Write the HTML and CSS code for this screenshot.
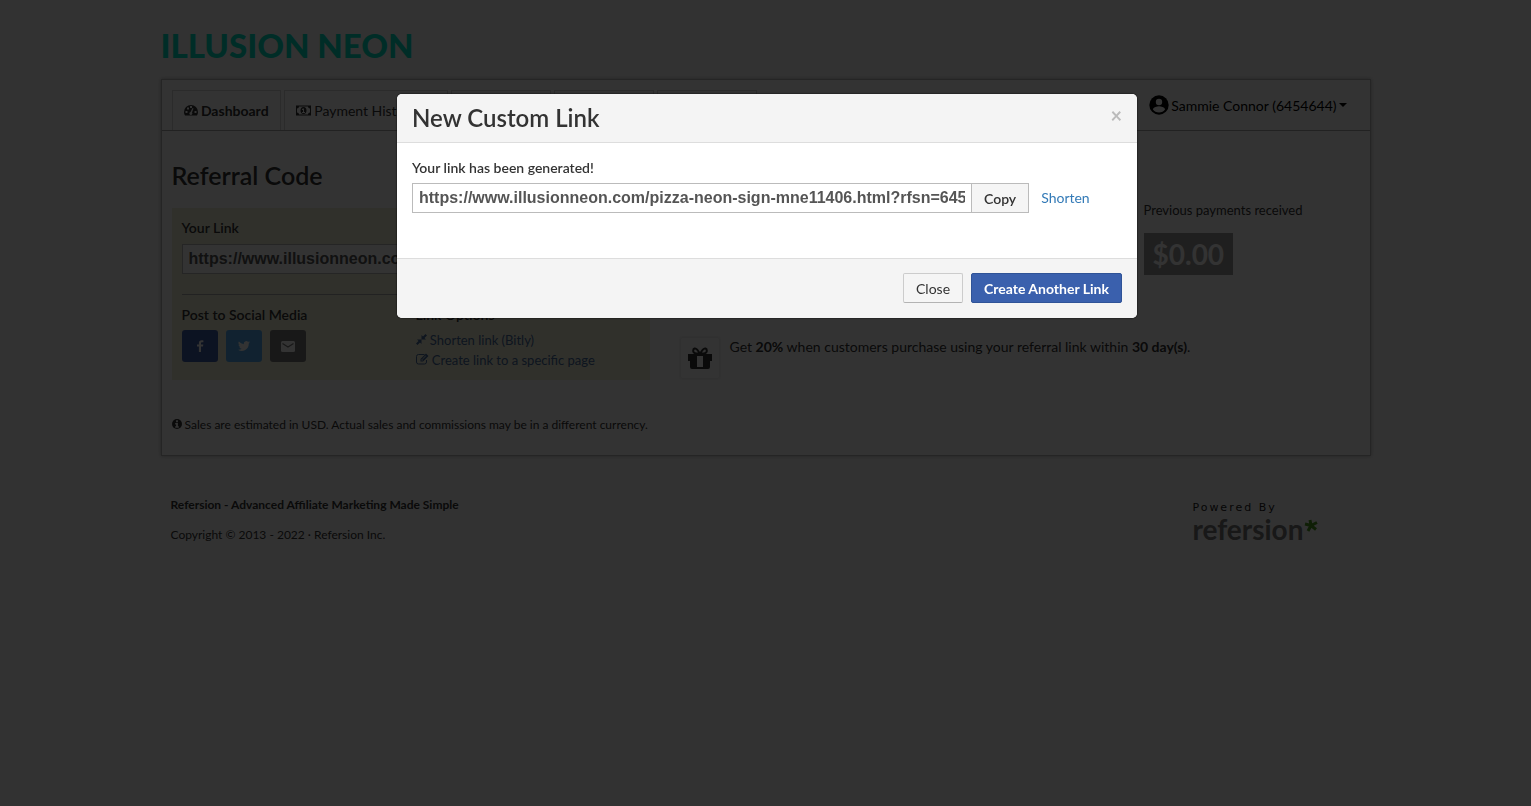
FILE: index.html
```html
<!DOCTYPE html>
<html lang="en">
<head>
    <meta charset="UTF-8">
    <meta name="viewport" content="width=device-width, initial-scale=1.0">
    <title>Referral Code</title>
    <link rel="stylesheet" href="styles.css">
</head>
<body>

<div class="container">
    <header class="brand">ILLUSION NEON</header>

    <main class="panel">
        <nav class="topbar">
            <div class="tabs">
                <a href="#" class="tab active">
                    <svg width="14" height="12" viewBox="0 0 28 24"><path fill="currentColor" fill-rule="evenodd" d="M14 2a14 14 0 0 0-14 14c0 3 1 5 2 7h24c1-2 2-4 2-7A14 14 0 0 0 14 2zM3 14h4v4H3zM6 7h4v4H6zM12 4h4v4h-4zM21 14h4v4h-4zM17 8l2 1-3 8a3 3 0 1 1-3-1z"/></svg>
                    Dashboard
                </a>
                <a href="#" class="tab wide">
                    <svg width="15" height="11" viewBox="0 0 30 22"><path fill="currentColor" fill-rule="evenodd" d="M0 1h30v20H0zM6 3a4 4 0 0 1-4 4v8a4 4 0 0 1 4 4h18a4 4 0 0 1 4-4V7a4 4 0 0 1-4-4zM15 4c4 0 6 3 6 7s-2 7-6 7-6-3-6-7 2-7 6-7zm-3 4v2h2v4h-2v2h6v-2h-2V7h-2z"/></svg>
                    Payment History
                </a>
                <a href="#" class="tab short" aria-label="Creatives"></a>
                <a href="#" class="tab short" aria-label="Resources"></a>
                <a href="#" class="tab short" aria-label="Settings"></a>
            </div>
            <button class="account" type="button">
                <svg width="20" height="20" viewBox="0 0 20 20"><circle cx="10" cy="10" r="9.7" fill="currentColor"/><circle cx="10" cy="7" r="3.2" fill="#fff"/><path fill="#fff" d="M3.8 14.3c1-2.2 4-3 6.200-3s5.200.8 6.200 3A7.500 7.500 0 0 1 10 17.600a7.500 7.500 0 0 1-6.200-3.300z"/></svg>
                Sammie Connor (6454644)
                <span class="caret"></span>
            </button>
        </nav>

        <h2>Referral Code</h2>

        <div class="columns">
            <section class="linkbox">
                <label for="your-link">Your Link</label>
                <input class="url" id="your-link" type="text" value="https://www.illusionneon.com/?rfsn=6454644" readonly>
                <hr>
                <div class="linkbox-row">
                    <div>
                        <strong>Post to Social Media</strong>
                        <div class="social">
                            <button class="facebook" type="button" aria-label="Facebook"><svg width="16" height="16" viewBox="0 0 16 16"><path fill="#fff" d="M9 14V8.600h2l.3-2H9V5.300c0-.7.3-1.100 1.100-1.100h1.300V2.400c-3-.5-4.500.2-4.500 2.700v1.500H5v2h1.900V14z"/></svg></button>
                            <button class="twitter" type="button" aria-label="Twitter"><svg width="12" height="12" viewBox="0 0 24 24"><path fill="#fff" d="M24 4.600a10 10 0 0 1-2.800.8 5 5 0 0 0 2.100-2.700 10 10 0 0 1-3.100 1.200 4.900 4.900 0 0 0-8.400 4.500A14 14 0 0 1 1.700 3.200a4.900 4.900 0 0 0 1.500 6.500 5 5 0 0 1-2.200-.6c0 2.300 1.600 4.400 3.900 4.900a5 5 0 0 1-2.200.1 4.900 4.900 0 0 0 4.600 3.400A9.900 9.900 0 0 1 0 19.500a14 14 0 0 0 21.500-12.400A10 10 0 0 0 24 4.600z"/></svg></button>
                            <button class="email" type="button" aria-label="Email"><svg width="14" height="11" viewBox="0 0 14 11"><rect width="14" height="11" rx="1.500" fill="#fff"/><path d="M1.500 2.500L7 6l5.500-3.500" fill="none" stroke="#777" stroke-width="1.300"/></svg></button>
                        </div>
                    </div>
                    <div>
                        <strong>Link Options</strong>
                        <a href="#" class="option"><svg width="11" height="11" viewBox="0 0 22 22"><path fill="currentColor" d="M11 11v9l-3-3-5 5-3-3 5-5-3-3zM11 11V2l3 3 5-5 3 3-5 5 3 3z"/></svg> Shorten link (Bitly)</a>
                        <a href="#" class="option"><svg width="13" height="12" viewBox="0 0 26 24"><path fill="none" stroke="currentColor" stroke-width="2" d="M17 3H5a4 4 0 0 0-4 4v11a4 4 0 0 0 4 4h12a4 4 0 0 0 4-4v-4"/><path fill="currentColor" fill-rule="evenodd" d="M9 17v-5L20 1l5 5-11 11zM11 13v2h2l1-1-2-2zM13 11l1 1 6-6-1-1z"/></svg> Create link to a specific page</a>
                    </div>
                </div>
            </section>

            <section class="stats">
                <div class="stat">
                    <span>Previous payments received</span>
                    <strong class="amount">$0.00</strong>
                </div>
                <div class="offer">
                    <span class="gift"><svg width="26" height="22" viewBox="0 0 26 22"><path fill="currentColor" d="M1 7h9v7H1zM16 7h9v7h-9zM3 14h7v8H5a2 2 0 0 1-2-2zM16 14h7v6a2 2 0 0 1-2 2h-5zM10 7h6v2h-6zM10 20h6v2h-6z"/><path fill="none" stroke="currentColor" stroke-width="2" d="M13 7C11 3 9 1 7.500 1.500S5 6 9 6.500h8c4-.5 3-4.500 1.500-5S15 3 13 7z"/></svg></span>
                    <p>Get <b>20%</b> when customers purchase using your referral link within <b>30 day(s)</b>.</p>
                </div>
            </section>
        </div>

        <p class="note"><svg width="10" height="10" viewBox="0 0 22 22"><circle cx="11" cy="11" r="11" fill="currentColor"/><path fill="#fff" d="M9 3h4v4H9zM7 9h6v7h2v3H7v-3h2v-4H7z"/></svg> Sales are estimated in USD. Actual sales and commissions may be in a different currency.</p>
    </main>

    <footer class="footer">
        <div>
            <p><b>Refersion - Advanced Affiliate Marketing Made Simple</b></p>
            <p>Copyright © 2013 - 2022 · Refersion Inc.</p>
        </div>
        <a href="#" class="powered">
            <span class="powered-by">Powered By</span>
            <span class="powered-name">refersion<svg width="14" height="13" viewBox="0 0 14 13"><path stroke="#4c9a20" stroke-width="3" d="M7 6.500L6 1M7 6.500l6-3M7 6.500l5 4M7 6.500L4 12M7 6.500L1 5"/></svg></span>
        </a>
    </footer>
</div>

<div class="overlay">
    <div class="modal" role="dialog" aria-labelledby="modal-title">
        <div class="modal-header">
            <h3 id="modal-title">New Custom Link</h3>
            <button class="close" type="button" aria-label="Close dialog">×</button>
        </div>
        <div class="modal-body">
            <label for="new-link">Your link has been generated!</label>
            <div class="copy-row">
                <input class="url" id="new-link" type="text" value="https://www.illusionneon.com/pizza-neon-sign-mne11406.html?rfsn=6454644" readonly>
                <button class="btn copy" type="button">Copy</button>
                <a href="#" class="shorten">Shorten</a>
            </div>
        </div>
        <div class="modal-footer">
            <button class="btn" type="button">Close</button>
            <button class="btn primary" type="button">Create Another Link</button>
        </div>
    </div>
</div>

</body>
</html>
```
FILE: styles.css
```css
* {
    box-sizing: border-box;
}

body {
    margin: 0;
    background-color: #fafafa;
    color: #333;
    font-family: Lato, sans-serif;
    font-size: 14px;
    line-height: 20px;
}

button,
input {
    font-family: inherit;
    font-size: 14px;
}

a {
    color: #337ab7;
    text-decoration: none;
}

h2,
h3,
p {
    margin: 0;
}

h2,
h3 {
    font-size: 24px;
    line-height: 28px;
    font-weight: 600;
}

.container {
    max-width: 1210px;
    margin: 0 auto;
    padding-top: 20px;
}

.brand {
    height: 50px;
    color: #00e0c3;
    font-size: 33px;
    line-height: 50px;
    font-weight: 900;
    white-space: nowrap;
}

.panel {
    margin-top: 9px;
    border: 1px solid #bbb;
    background-color: #fff;
    box-shadow: 0 0 4px rgba(0, 0, 0, 0.3);
}

.topbar {
    display: flex;
    justify-content: space-between;
    padding: 10px 23px 0 10px;
    border-bottom: 1px solid #aaa;
}

.tabs {
    display: flex;
    gap: 3px;
}

.tab {
    height: 40px;
    padding: 10px 11px;
    border: 1px solid #d5d5d5;
    border-bottom: 0;
    color: #333;
}

.tab.active {
    font-weight: bold;
}

.tab.wide {
    min-width: 164px;
}

.tab.short {
    min-width: 100px;
}

.account {
    display: flex;
    align-items: center;
    gap: 2px;
    height: 30px;
    padding: 0;
    border: 0;
    background: none;
    color: #000;
}

.caret {
    border: 4px solid transparent;
    border-top-color: #000;
    border-bottom: 0;
}

.panel h2 {
    padding: 30px 10px 19px;
    font-size: 25px;
}

.columns {
    display: grid;
    grid-template-columns: 478px 1fr;
    gap: 30px;
    padding: 0 10px;
}

.linkbox {
    height: 172px;
    padding: 10px;
    background-color: #f0f0d8;
}

.linkbox label {
    display: block;
    margin-bottom: 6px;
    font-weight: 600;
}

.url {
    display: block;
    width: 100%;
    height: 30px;
    padding: 4px 6px;
    border: 1px solid #bbb;
    background-color: #fff;
    color: #555;
    font-family: "Liberation Sans", Arial, sans-serif;
    font-size: 16px;
    font-weight: 900;
}

.linkbox hr {
    margin: 20px 0 10px;
    border: 0;
    border-top: 1px solid #aaa;
}

.linkbox-row {
    display: grid;
    grid-template-columns: 1fr 1fr;
    gap: 10px;
}

.linkbox strong {
    display: block;
    margin-bottom: 5px;
    font-weight: 600;
}

.social {
    display: flex;
    gap: 8px;
}

.social button {
    display: flex;
    align-items: center;
    justify-content: center;
    width: 36px;
    height: 32px;
    border: 0;
    border-radius: 3px;
}

.facebook {
    background-color: #3f5fa8;
}

.twitter {
    background-color: #55acee;
}

.email {
    background-color: #777;
}

.option {
    display: block;
    color: #45689a;
    font-size: 13px;
}

.stats {
    display: grid;
    grid-template-columns: 232px 232px 1fr;
    grid-template-rows: 129px auto;
}

.stat {
    display: flex;
    flex-direction: column;
    align-items: flex-start;
    grid-column: 3;
    gap: 13px;
    margin-top: -8px;
    font-size: 13px;
}

.amount {
    padding: 0 9px;
    background-color: #999;
    color: #fff;
    font-size: 28px;
    line-height: 42px;
}

.offer {
    display: flex;
    grid-column: 1 / -1;
    gap: 10px;
}

.gift {
    display: flex;
    align-items: center;
    justify-content: center;
    width: 40px;
    height: 42px;
    border: 1px solid #eee;
    border-radius: 3px;
    box-shadow: 0 0 2px rgba(0, 0, 0, 0.2);
}

.note {
    padding: 35px 10px 20px;
    font-size: 12px;
}

.footer {
    display: flex;
    justify-content: space-between;
    padding: 39px 53px 0 10px;
    font-size: 12px;
}

.footer p {
    margin-bottom: 10px;
}

.powered {
    color: #777;
}

.powered-by {
    display: block;
    padding-top: 2px;
    color: #222;
    font-family: "DejaVu Sans", sans-serif;
    font-size: 11px;
    line-height: 22px;
    letter-spacing: 2px;
}

.powered-name {
    display: flex;
    align-items: flex-start;
    font-size: 28px;
    line-height: 20px;
    font-weight: bold;
}

.overlay {
    position: fixed;
    inset: 0;
    padding: 94px 0 0 3px;
    background-color: rgba(0, 0, 0, 0.8);
}

.modal {
    max-width: 740px;
    margin: 0 auto;
    border-radius: 5px;
    background-color: #fff;
    box-shadow: 0 0 2px #000;
    overflow: hidden;
}

.modal-header {
    display: flex;
    align-items: flex-start;
    justify-content: space-between;
    padding: 10px 15px;
    border-bottom: 1px solid #ddd;
    background-color: #f4f4f4;
}

.close {
    padding: 0;
    border: 0;
    background: none;
    color: #bbb;
    font-size: 20px;
    line-height: 22px;
    font-weight: bold;
}

.modal-body {
    padding: 15px 15px 45px;
}

.modal-body label {
    display: block;
    margin-bottom: 5px;
    font-weight: 600;
}

.copy-row {
    display: flex;
    align-items: center;
}

.copy-row .url {
    width: 560px;
}

.btn {
    height: 30px;
    padding: 0 12px;
    border: 1px solid #ccc;
    border-bottom-color: #b3b3b3;
    border-radius: 2px;
    background-color: #f5f5f5;
    color: #333;
}

.btn.copy {
    margin-left: -1px;
    border-color: #bbb;
    border-radius: 0;
    font-weight: 600;
}

.btn.primary {
    border-color: #2f5397;
    background-color: #3a60ad;
    color: #fff;
    font-weight: bold;
}

.shorten {
    margin-left: 12px;
}

.modal-footer {
    display: flex;
    justify-content: flex-end;
    gap: 8px;
    padding: 14px 15px 15px;
    border-top: 1px solid #ddd;
    background-color: #f4f4f4;
}
```
